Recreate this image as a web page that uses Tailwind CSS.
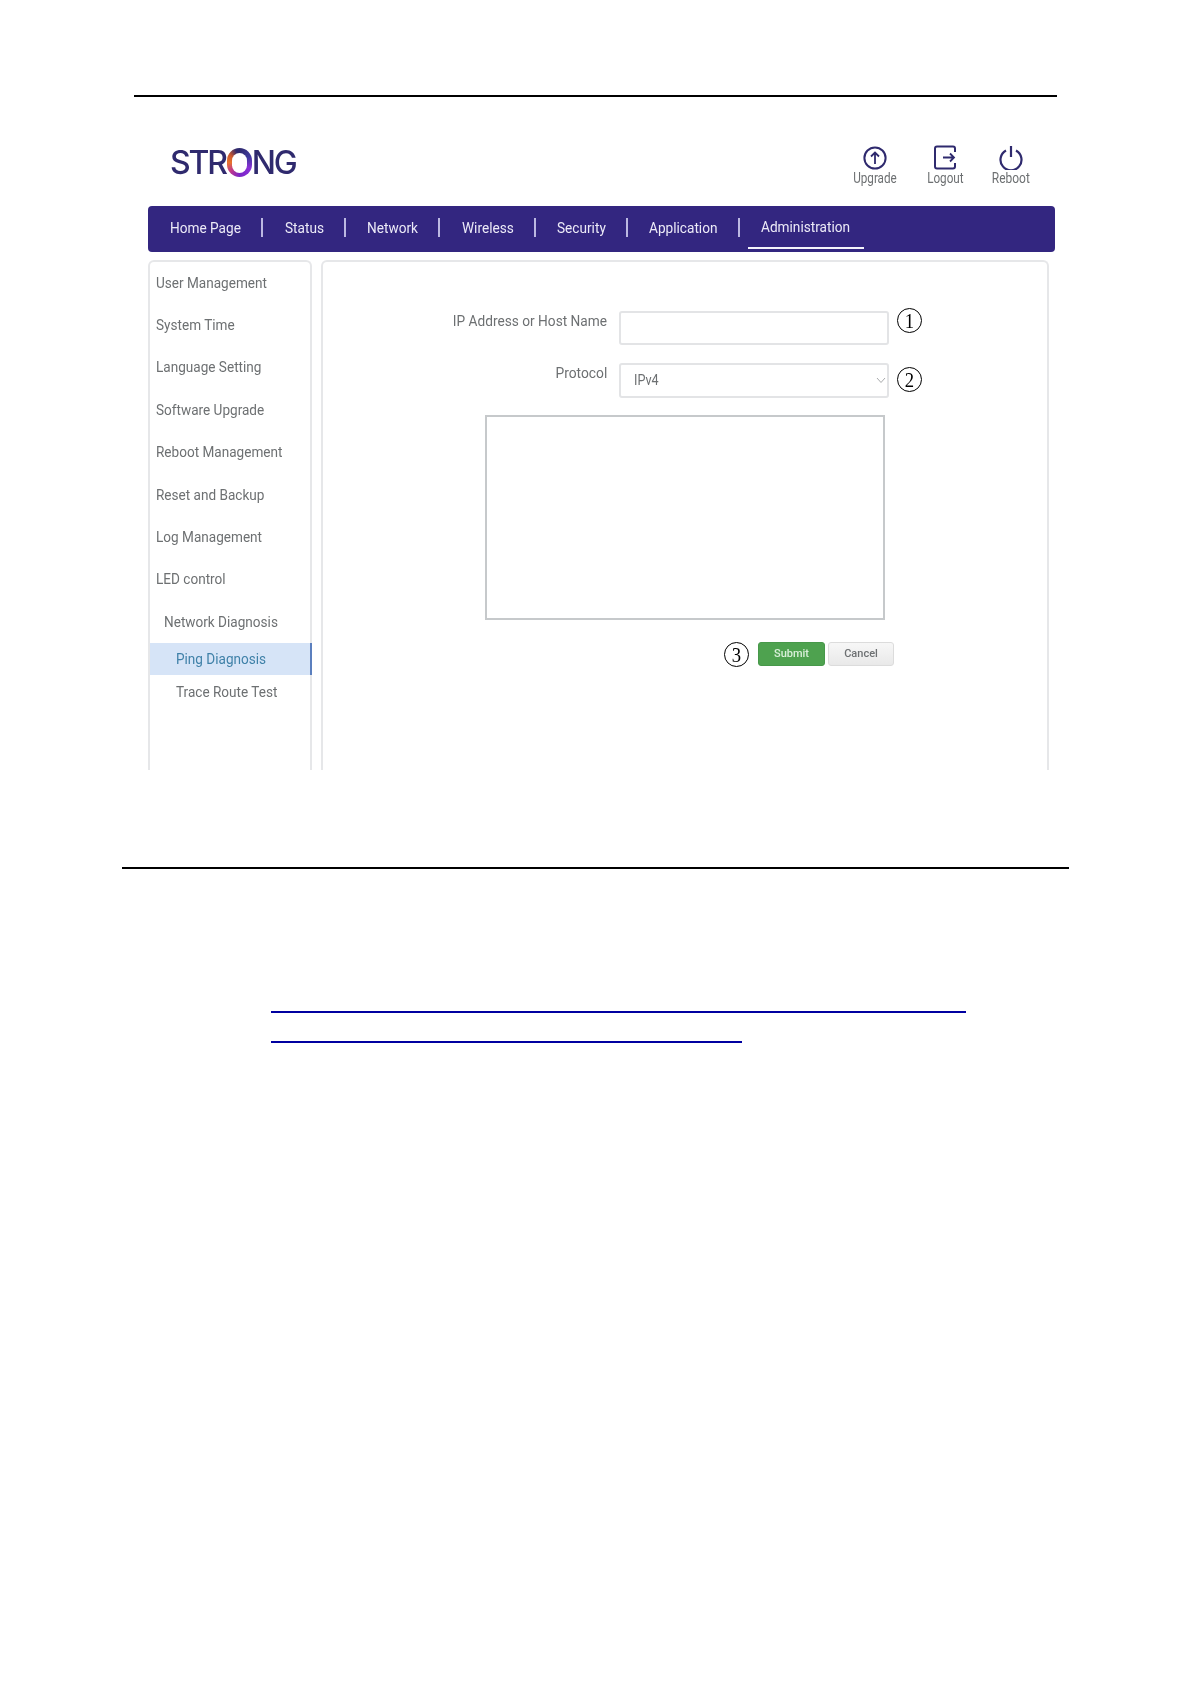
<!DOCTYPE html>
<html><head><meta charset="utf-8"><title>Ping Diagnosis</title>
<script src="https://cdn.jsdelivr.net/npm/@tailwindcss/browser@4"></script></head>
<body class="bg-white">
<div class="w-[1190px] h-[1684px] overflow-hidden bg-white font-['Roboto',sans-serif] text-[15px] leading-[22px] text-[#6d7072]">
  <div class="h-[95px]"></div>
  <div class="ml-[134px] w-[923px] h-[2px] bg-black"></div>
  <div class="ml-[148px] w-[907px] blur-[0.35px]">
    <header class="h-[109px] flex items-start">
      <div class="ml-[22px] mt-[51px] h-[29px] flex items-center font-['Inter',sans-serif] text-[32px] leading-[29px] font-medium text-[#2f2a6e] tracking-[-2.2px]" aria-label="STRONG">
        <span>STR</span>
        <span class="w-[25px] h-[29px] ml-[1px] rounded-full bg-[conic-gradient(#2f2a6e_0deg,#3f3a9e_60deg,#8a2fd6_120deg,#7a25c8_180deg,#c0398a_225deg,#e8742a_270deg,#c9562f_310deg,#2f2a6e_345deg)] flex items-center justify-center">
          <span class="w-[15px] h-[20px] rounded-full bg-white"></span>
        </span>
        <span>NG</span>
      </div>
      <div class="ml-auto flex items-start text-[15px] leading-[16px] text-[#6d7072]">
        <div class="w-[60px] mt-[49px] flex flex-col items-center mr-[10px]">
          <svg class="w-[24px] h-[24px]" viewBox="0 0 24 24" fill="none" stroke="#2f2a6e" stroke-width="2"><circle cx="12" cy="12" r="10.6"/><path d="M12 18V7M8 10.5 12 6.500l4 4" stroke-width="1.8"/></svg>
          <span class="scale-x-[0.78] whitespace-nowrap">Upgrade</span>
        </div>
        <div class="w-[60px] mt-[48px] flex flex-col items-center mr-[9px]">
          <svg class="w-[24px] h-[25px]" viewBox="0 0 24 25" fill="none" stroke="#2f2a6e" stroke-width="2"><path d="M22 7V3.5Q22 1.5 20 1.5H4Q2 1.5 2 3.5V21.500Q2 23.500 4 23.500H20Q22 23.500 22 21.500V18"/><path d="M10 12.500H21M17 8.500l4 4-4 4" stroke-width="1.8"/></svg>
          <span class="scale-x-[0.78] whitespace-nowrap">Logout</span>
        </div>
        <div class="w-[54px] mt-[48px] flex flex-col items-center mr-[17px]">
          <svg class="w-[24px] h-[25px]" viewBox="0 0 24 25" fill="none" stroke="#2f2a6e" stroke-width="2.200"><path d="M7 5.500A10.500 10.500 0 1 0 17 5.500"/><path d="M12 1v11"/></svg>
          <span class="scale-x-[0.8] whitespace-nowrap">Reboot</span>
        </div>
      </div>
    </header>
    <nav class="h-[46px] bg-[#332680] rounded-[4px] flex items-start text-[15.5px] leading-[22px] text-[#eceaf7]">
      <a class="ml-[22px] w-[91px] mt-[11px] origin-left scale-x-[0.88] whitespace-nowrap">Home Page</a>
      <span class="mt-[12px] w-[2px] h-[19px] bg-[#bcb8e2]"></span>
      <a class="ml-[22px] w-[59px] mt-[11px] origin-left scale-x-[0.88] whitespace-nowrap">Status</a>
      <span class="mt-[12px] w-[2px] h-[19px] bg-[#bcb8e2]"></span>
      <a class="ml-[21px] w-[71px] mt-[11px] origin-left scale-x-[0.88] whitespace-nowrap">Network</a>
      <span class="mt-[12px] w-[2px] h-[19px] bg-[#bcb8e2]"></span>
      <a class="ml-[22px] w-[72px] mt-[11px] origin-left scale-x-[0.88] whitespace-nowrap">Wireless</a>
      <span class="mt-[12px] w-[2px] h-[19px] bg-[#bcb8e2]"></span>
      <a class="ml-[21px] w-[69px] mt-[11px] origin-left scale-x-[0.88] whitespace-nowrap">Security</a>
      <span class="mt-[12px] w-[2px] h-[19px] bg-[#bcb8e2]"></span>
      <a class="ml-[21px] w-[89px] mt-[11px] origin-left scale-x-[0.88] whitespace-nowrap">Application</a>
      <span class="mt-[12px] w-[2px] h-[19px] bg-[#bcb8e2]"></span>
      <a class="ml-[8px] w-[116px] h-[43px] pt-[10px] pl-[13px] border-b-[2.5px] border-[#f4f3fb]"><span class="block origin-left scale-x-[0.88] whitespace-nowrap">Administration</span></a>
    </nav>
    <div class="mt-[8px] h-[510px] flex items-stretch">
      <aside class="w-[164px] border-2 border-b-0 border-[#e6e7e9] rounded-t-[6px]">
        <ul class="-mt-[0.500px] text-[15px]">
          <li class="h-[42.400px] pl-[6px] flex items-center"><span class="origin-left scale-x-[0.905] whitespace-nowrap">User Management</span></li>
          <li class="h-[42.400px] pl-[6px] flex items-center"><span class="origin-left scale-x-[0.905] whitespace-nowrap">System Time</span></li>
          <li class="h-[42.400px] pl-[6px] flex items-center"><span class="origin-left scale-x-[0.905] whitespace-nowrap">Language Setting</span></li>
          <li class="h-[42.400px] pl-[6px] flex items-center"><span class="origin-left scale-x-[0.905] whitespace-nowrap">Software Upgrade</span></li>
          <li class="h-[42.400px] pl-[6px] flex items-center"><span class="origin-left scale-x-[0.905] whitespace-nowrap">Reboot Management</span></li>
          <li class="h-[42.400px] pl-[6px] flex items-center"><span class="origin-left scale-x-[0.905] whitespace-nowrap">Reset and Backup</span></li>
          <li class="h-[42.400px] pl-[6px] flex items-center"><span class="origin-left scale-x-[0.905] whitespace-nowrap">Log Management</span></li>
          <li class="h-[42.400px] pl-[6px] flex items-center"><span class="origin-left scale-x-[0.905] whitespace-nowrap">LED control</span></li>
          <li class="h-[42.400px] pl-[14px] flex items-center"><span class="origin-left scale-x-[0.905] whitespace-nowrap">Network Diagnosis</span></li>
          <li class="h-[32px] pl-[26px] -mr-[2px] flex items-center bg-[#d6e4f7] text-[#3f81a8] border-r-2 border-[#5b7fbe]"><span class="origin-left scale-x-[0.905] whitespace-nowrap">Ping Diagnosis</span></li>
          <li class="h-[33px] pl-[26px] flex items-center"><span class="origin-left scale-x-[0.905] whitespace-nowrap">Trace Route Test</span></li>
        </ul>
      </aside>
      <main class="ml-[9px] w-[728px] border-2 border-b-0 border-[#e6e7e9] rounded-t-[6px]">
        <div class="mt-[49px] flex items-start h-[34px]">
          <label class="w-[284px] text-right -mt-[1px]"><span class="inline-block origin-right scale-x-[0.912] whitespace-nowrap">IP Address or Host Name</span></label>
          <div class="ml-[12px] w-[270px] h-[34px] rounded-[3px] border-2 border-[#e3e4e6] bg-white"></div>
          <span class="ml-[8px] -mt-[3px] w-[25px] h-[25px] rounded-full border border-black flex items-center justify-center font-['Liberation_Serif',serif] text-[22px] text-black"><span class="scale-x-[0.85]">1</span></span>
        </div>
        <div class="mt-[18px] flex items-start h-[35px]">
          <label class="w-[284px] text-right -mt-[1px]"><span class="inline-block origin-right scale-x-[0.92] whitespace-nowrap">Protocol</span></label>
          <div class="ml-[12px] w-[270px] h-[35px] rounded-[3px] border-2 border-[#e3e4e6] bg-white flex items-center pl-[13px] pr-[1px] pb-[1px] text-[14px]">
            <span class="origin-left scale-x-[0.9]">IPv4</span>
            <svg class="ml-auto w-[10px] h-[7px]" viewBox="0 0 10 7" fill="none" stroke="#a9abad" stroke-width="1"><path d="M1 1l4 4.500L9 1"/></svg>
          </div>
          <span class="ml-[8px] mt-[4px] w-[25px] h-[25px] rounded-full border border-black flex items-center justify-center font-['Liberation_Serif',serif] text-[22px] text-black"><span class="scale-x-[0.85]">2</span></span>
        </div>
        <div class="mt-[17px] ml-[162px] w-[400px] h-[205px] border-2 border-[#c6c9cb] bg-white"></div>
        <div class="mt-[22px] ml-[401px] flex items-start">
          <span class="w-[25px] h-[25px] rounded-full border border-black flex items-center justify-center font-['Liberation_Serif',serif] text-[22px] text-black"><span class="scale-x-[0.85]">3</span></span>
          <button class="ml-[9px] w-[67px] h-[24px] rounded-[3px] bg-[#4ea24f] border border-[#47984a] text-[11px] leading-[22px] font-medium text-[#d9f0d9]">Submit</button>
          <button class="ml-[3px] w-[66px] h-[24px] rounded-[3px] bg-gradient-to-b from-[#f7f7f7] to-[#e9e9e9] border border-[#dcdcdc] text-[11px] leading-[22px] font-medium text-[#6d7072]">Cancel</button>
        </div>
      </main>
    </div>
  </div>
  <div class="mt-[97px] ml-[122px] w-[947px] h-[2px] bg-black"></div>
  <div class="mt-[142px] ml-[271px] w-[695px] h-[2px] bg-[#0000a0]"></div>
  <div class="mt-[28px] ml-[271px] w-[471px] h-[2px] bg-[#0000a0]"></div>
</div>
</body></html>
